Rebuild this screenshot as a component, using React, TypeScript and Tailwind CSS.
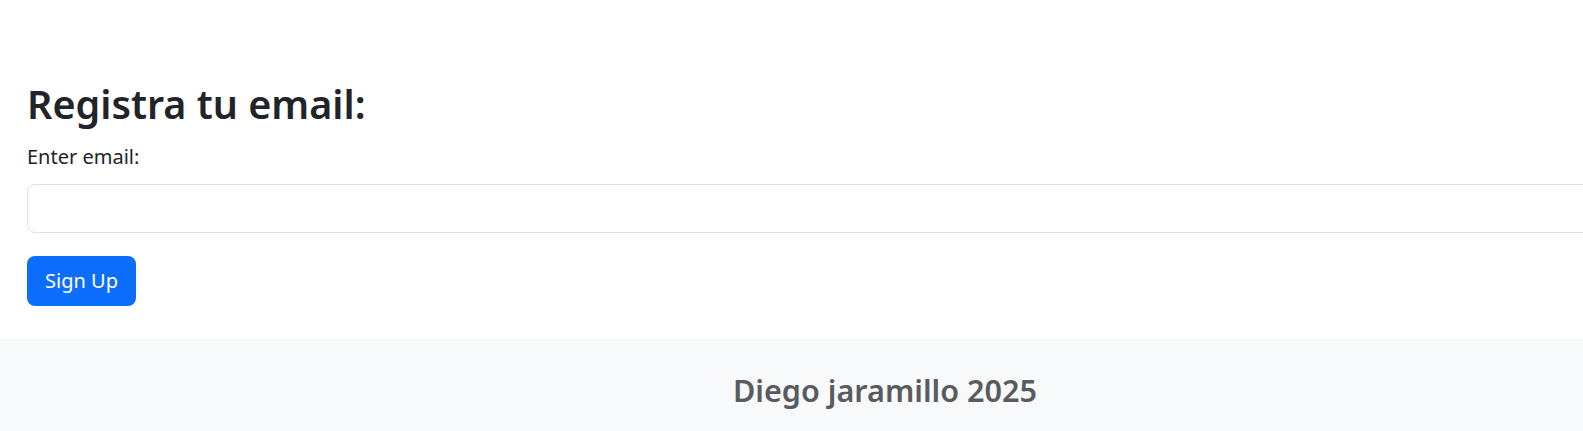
export default function App() {
  return (
    <div className="w-full overflow-hidden bg-white" style={{ fontFamily: '"Noto Sans", "Open Sans", sans-serif' }}>
      <div className="w-[1770px]">
        <main className="px-[27px] pt-[81px] pb-[33px]">
          <h1 className="text-[39.5px] leading-[1.2] font-semibold text-[#212529]">Registra tu email:</h1>
          <label className="mt-[14px] block text-[20px] leading-[1.5] text-[#212529]">Enter email:</label>
          <input
            type="email"
            className="mt-[12px] block h-[49px] w-full rounded-[8px] border border-[#dee2e6] bg-white px-4 text-[20px] outline-none"
          />
          <button className="mt-[23px] flex h-[50px] w-[109px] items-center justify-center rounded-[8px] bg-[#0d6efd] text-[20px] text-white">
            Sign Up
          </button>
        </main>
        <footer className="bg-[#f8f9fa] pt-[33px] pb-[30px] text-center">
          <h2 className="text-[30.6px] leading-[1.2] font-semibold text-[#595c5f]">Diego jaramillo 2025</h2>
        </footer>
      </div>
    </div>
  );
}
